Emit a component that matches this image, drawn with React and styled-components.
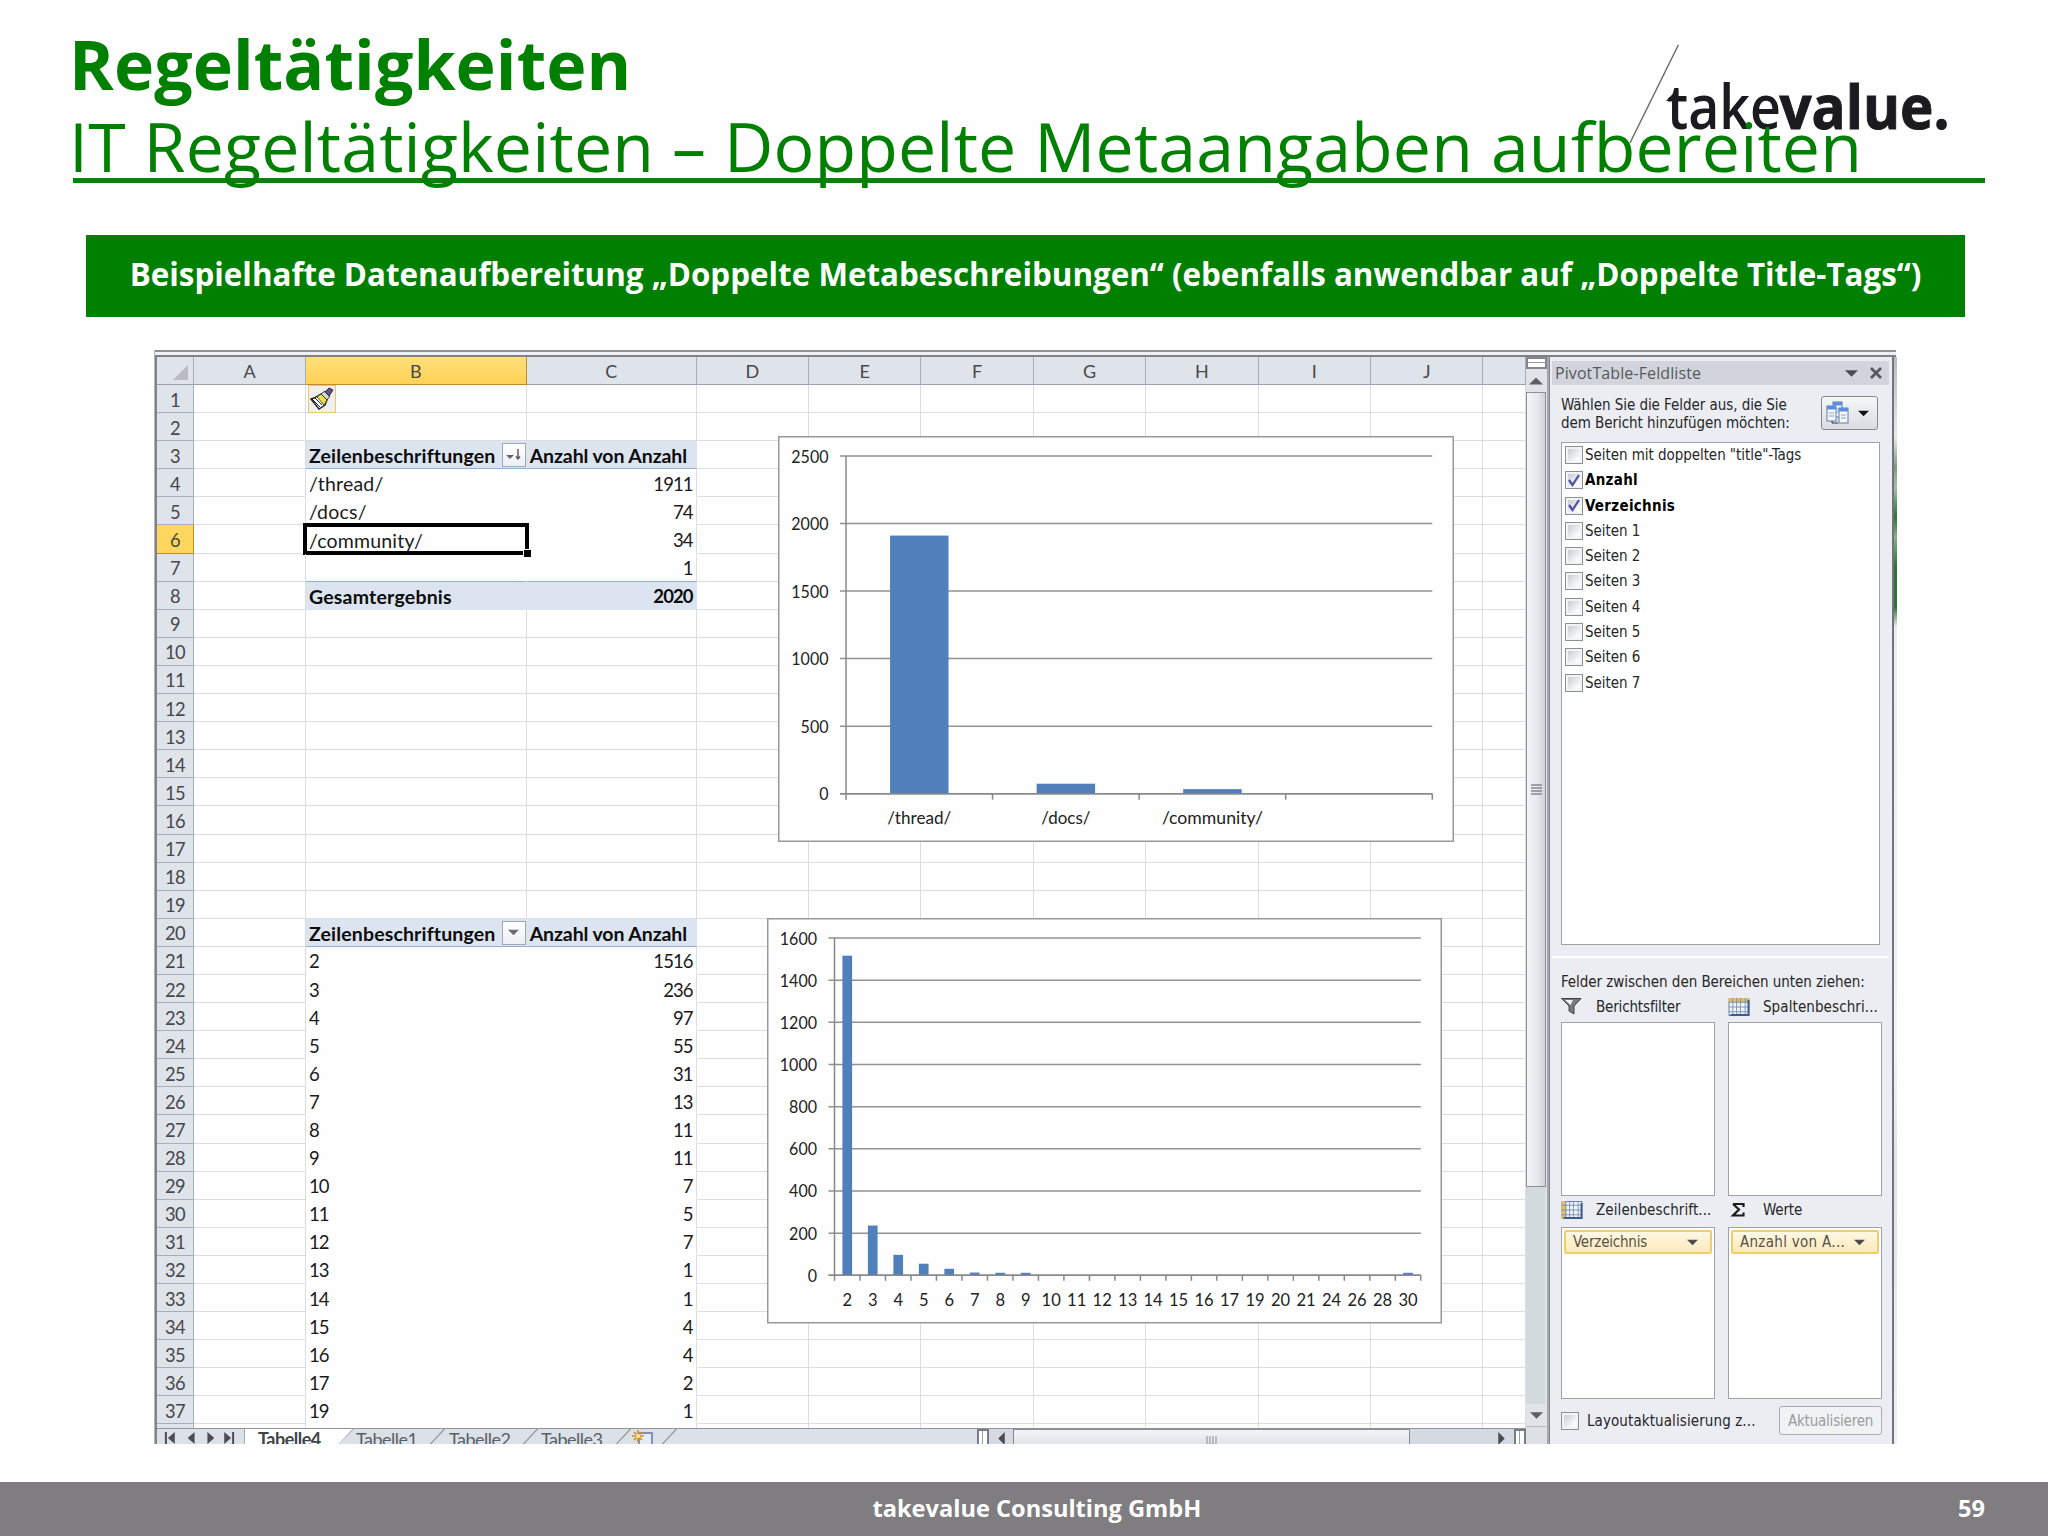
import React from 'react';
import styled, { createGlobalStyle, css } from 'styled-components';

const GlobalStyle = createGlobalStyle`
  body {
    margin: 0;
    background: #fefefe;
    overflow: hidden;
  }

  * {
    box-sizing: border-box;
  }
`;

const sheetFont = "Lato, 'Open Sans', sans-serif";
const paneFont = "'DejaVu Sans Condensed', 'DejaVu Sans', sans-serif";

const Slide = styled.div`
  width: 2048px;
  height: 1536px;
  display: flex;
  flex-direction: column;
  background: #fefefe;
  font-family: 'Open Sans', sans-serif;
`;

const SlideHeader = styled.header`
  position: relative;
  height: 235px;
  padding: 23px 63px 0 73px;
  color: #008000;
`;

const Title = styled.h1`
  margin: 0 0 0 -4px;
  font-size: 68px;
  line-height: 82px;
  font-weight: 700;
  white-space: nowrap;
  letter-spacing: 0.07px;
  position: relative;
`;

const Subtitle = styled(Title)`
  font-weight: 400;
  letter-spacing: 0.16px;
`;

const Rule = styled.div`
  height: 5px;
  margin-top: -9px;
  background: #0a820a;
`;

const Logo = styled.svg`
  position: absolute;
  left: 1620px;
  top: 36px;
  overflow: visible;
`;

const Banner = styled.div`
  height: 82px;
  margin: 0 83px 0 86px;
  padding-bottom: 6px;
  display: flex;
  align-items: center;
  justify-content: center;
  background: #008000;
  color: #fff;
  font-size: 31.35px;
  font-weight: 700;
  white-space: nowrap;
`;

const Footer = styled.footer`
  height: 54px;
  margin-top: auto;
  padding: 0 63px 2px 0;
  display: grid;
  grid-template-columns: 1fr 330px 1fr;
  align-items: center;
  background: #807d80;
  color: #fff;
  font-size: 23.6px;
  font-weight: 700;

  span {
    white-space: nowrap;
  }

  span:nth-child(1) {
    grid-column: 2;
    margin-left: 45px;
  }

  span:nth-child(2) {
    text-align: right;
  }
`;

const Excel = styled.div`
  width: 1743px;
  height: 1094px;
  margin: 33px 0 0 154px;
  display: flex;
  flex-direction: column;
  overflow: hidden;
  border-left: 1px solid #b4b6ba;
`;

const TopStrip = styled.div`
  height: 7px;
  width: 1741px;
  background: #eef0f3;
  border-top: 2px solid #8d9095;
  border-bottom: 2px solid #7e8288;
`;

const Body = styled.div`
  flex: 1;
  display: flex;
  min-height: 0;
`;

const SheetArea = styled.div`
  position: relative;
  width: 1371px;
  border-left: 2px solid #7f8388;
  display: flex;
  flex-direction: column;
  background: #fefefe;
  font-family: ${sheetFont};
`;

const Cells = styled.div`
  height: 1071px;
  overflow: hidden;
`;

const columns = '37px 112px 220.7px 170px repeat(7, 112.4px) 42.5px';

const HeadRow = styled.div`
  display: grid;
  grid-template-columns: ${columns};
  height: 28px;
`;

const HeadCell = styled.div`
  display: flex;
  align-items: center;
  justify-content: center;
  background: ${props => (props.$active ? 'linear-gradient(#ffdf7c, #ffd254)' : '#dfe3ea')};
  border-right: 1px solid ${props => (props.$active ? '#c28a30' : '#a8aeb8')};
  border-bottom: 1px solid ${props => (props.$active ? '#c28a30' : '#98a0ab')};
  color: #46484c;
  font-size: 18px;
`;

const Row = styled(HeadRow)`
  height: 28.1px;
`;

const RowHead = styled.div`
  display: flex;
  align-items: center;
  justify-content: center;
  padding-top: 2px;
  background: ${props => (props.$active ? '#ffd65e' : '#dfe3ea')};
  border-right: 1px solid ${props => (props.$active ? '#c28a30' : '#a8aeb8')};
  border-bottom: 1px solid ${props => (props.$active ? '#c28a30' : '#a8aeb8')};
  color: #46484c;
  font-size: 18.3px;
  letter-spacing: -0.7px;
`;

const Cell = styled.div`
  position: relative;
  display: flex;
  align-items: center;
  justify-content: ${props => (props.$right ? 'flex-end' : 'flex-start')};
  padding: 2px 3px 0;
  border-right: 1px solid #dcdde3;
  border-bottom: 1px solid #dcdde3;
  color: #1a1a1a;
  font-size: ${props => (props.$words ? '19.5px' : '18.5px')};
  letter-spacing: ${props => (props.$words ? '0.2px' : '-0.9px')};
  white-space: nowrap;

  ${props => props.$plain && css`
    border-bottom-color: transparent;
    border-right-color: ${props.$edge ? '#dcdde3' : 'transparent'};
  `}

  ${props => props.$band && css`
    background: #dce4f0;
    border-right-color: #dce4f0;
    border-bottom-color: ${props.$band === 'head' ? '#8fb0d8' : '#dce4f0'};
    color: #0c0c0c;
    font-weight: 700;
  `}

  ${props => props.$band === 'head' && css`
    letter-spacing: ${props.$edge ? '-0.1px' : '0.15px'};
  `}

  ${props => props.$lineBelow && css`
    border-bottom-color: #8fb0d8;
  `}
`;

const Selection = styled.div`
  position: absolute;
  left: -3px;
  top: -2px;
  right: -3px;
  bottom: -2px;
  border: 4px solid #000;

  &::after {
    content: '';
    position: absolute;
    right: -6px;
    bottom: -6px;
    width: 7px;
    height: 7px;
    background: #000;
    outline: 1px solid #fff;
  }
`;

const FilterButton = styled.div`
  position: absolute;
  right: 0;
  top: 2px;
  width: 24px;
  height: 24px;
  display: grid;
  place-items: center;
  border: 1px solid #a3a7b0;
  background: linear-gradient(#fff, #eceff4);
`;

const PasteTag = styled.div`
  position: absolute;
  left: 2px;
  top: 0;
  width: 28px;
  height: 28px;
  border: 1px solid #ecc860;
  background: #f0eeee;
`;

const Chart = styled.svg`
  position: absolute;
  font-family: ${sheetFont};
  font-size: 17px;
  fill: #222;
`;

const ThreadChart = styled(Chart)`
  left: 621px;
  top: 79px;
`;

const CountChart = styled(Chart)`
  left: 610px;
  top: 561px;
`;

const TabBar = styled.div`
  height: 16px;
  display: flex;
  background: #dbe1e6;
  border-top: 1px solid #8f959c;
  overflow: hidden;
`;

const TabNav = styled.svg`
  width: 88px;
  border-right: 1px solid #a4aab0;
`;

const Tabs = styled.div`
  display: flex;
  width: 732px;
`;

const Tab = styled.div`
  position: relative;
  width: ${props => props.$width};
  padding-left: ${props => props.$pad || '11px'};
  color: ${props => (props.$active ? '#3c4548' : '#5a6068')};
  background: ${props => (props.$active ? '#fff' : 'transparent')};
  clip-path: ${props => (props.$active ? 'polygon(0 0, 100% 0, calc(100% - 15px) 100%, 0 100%)' : 'none')};
  font-size: 18px;
  font-weight: ${props => (props.$active ? 700 : 400)};
  line-height: 21px;
  letter-spacing: -0.5px;
  white-space: nowrap;

  svg {
    position: absolute;
    right: 0;
    top: 0;
  }
`;

const HScroll = styled.div`
  flex: 1;
  display: flex;
  background: #d5dae2;
`;

const SplitBox = styled.div`
  width: 12px;
  border: 2px solid #777d84;
  border-bottom: 0;
  background: linear-gradient(90deg, #fff 3px, #9a9fa6 3px, #9a9fa6 4px, #fff 4px);
`;

const ArrowSlot = styled.div`
  width: ${props => (props.$end ? '104px' : '24px')};
  display: flex;
  align-items: center;
  justify-content: ${props => (props.$end ? 'flex-end' : 'center')};
  padding: 3px ${props => (props.$end ? '6px' : '0')} 0 0;
`;

const HThumb = styled.div`
  width: 397px;
  display: flex;
  justify-content: center;
  padding-top: 6px;
  border: 1px solid #868b91;
  border-bottom: 0;
  background: linear-gradient(#f4f5f6, #dfe4e6);
`;

const VScroll = styled.div`
  width: 24px;
  display: flex;
  flex-direction: column;
  border-right: 1px solid #83878d;
  background: #d3dade;
  box-shadow: inset -2px 0 #a4a8b0, inset -4px 0 #dfe2e6;
`;

const VSplit = styled.div`
  width: 21px;
  height: 12px;
  border: 2px solid #82868d;
  background: linear-gradient(#fff 3px, #9a9ea4 3px, #9a9ea4 4px, #fff 4px);
`;

const VButton = styled.div`
  width: 20px;
  height: ${props => props.$height};
  display: grid;
  place-items: center;
  background: #e0e3e8;
`;

const VThumb = styled.div`
  width: 20px;
  height: 795px;
  display: grid;
  place-items: center;
  border: 1px solid #8c9097;
  background: linear-gradient(90deg, #f4f5f8, #e7e9ed 55%, #cfd2d7);
`;

const ScrollTrack = styled.div`
  flex: 1;
`;

const Corner = styled.div`
  height: 18px;
  width: 20px;
  border-top: 1px solid #b3b8be;
  background: #dde0e4;
`;

const Pane = styled.aside`
  width: 343px;
  padding: 4px 3px 0 2px;
  display: flex;
  flex-direction: column;
  background: #ebedf2;
  font-family: ${paneFont};
  font-size: 15px;
  letter-spacing: -0.05px;
  color: #262628;
  white-space: nowrap;
`;

const PaneTitle = styled.div`
  height: 24px;
  display: flex;
  align-items: center;
  padding: 0 6px 0 3px;
  background: #d1d5db;
  color: #55585e;
  font-family: 'Open Sans', sans-serif;
  font-size: 16px;

  span {
    flex: 1;
    letter-spacing: 0.1px;
  }
`;

const PaneIntro = styled.div`
  height: 57px;
  display: flex;
  justify-content: space-between;
  padding: 11px 11px 0 9px;

  p {
    margin: 0;
    line-height: 18px;
  }
`;

const LayoutButton = styled.div`
  width: 57px;
  height: 34px;
  display: flex;
  align-items: center;
  justify-content: space-between;
  padding: 0 8px 0 4px;
  border: 1px solid #85888e;
  border-radius: 3px;
  background: linear-gradient(#f7f7f8, #dadce0);
`;

const FieldList = styled.div`
  height: 503px;
  margin: 0 9px 0 9px;
  padding: 3px 0 0 3px;
  border: 1px solid #9ea2a9;
  background: #fff;
`;

const Field = styled.div`
  height: 25.3px;
  display: flex;
  align-items: flex-start;
  gap: 2px;
  line-height: 18px;
  color: ${props => (props.$checked ? '#000' : '#262628')};
  font-weight: ${props => (props.$checked ? 700 : 400)};
  letter-spacing: ${props => (props.$checked ? '0.3px' : '-0.05px')};
`;

const CheckBox = styled.div`
  width: 18px;
  height: 18px;
  flex: none;
  display: grid;
  place-items: center;
  border: 1px solid #8d9096;
  background: linear-gradient(135deg, #c0c3c9, #fbfbfb 75%);
  box-shadow: inset 0 0 0 2px #f3f3f4;
`;

const Divider = styled.div`
  height: 2px;
  margin: 11px 0 13px;
  background: #fff;
`;

const DragHint = styled.div`
  height: 23px;
  padding-left: 9px;
  line-height: 23px;
`;

const Areas = styled.div`
  display: grid;
  grid-template-columns: 154px 154px;
  grid-template-rows: 28px 173.5px 31.5px 172px;
  column-gap: 13px;
  padding-left: 9px;
`;

const AreaLabel = styled.div`
  display: grid;
  grid-template-columns: 35px 1fr;
  align-items: center;
  letter-spacing: ${props => (props.$long ? '0.1px' : '-0.15px')};
  padding-bottom: 3px;

  svg {
    display: block;
  }
`;

const AreaBox = styled.div`
  padding: 2px;
  border: 1px solid #9ea2a9;
  background: #fff;
`;

const Chip = styled.div`
  height: 24px;
  display: flex;
  align-items: center;
  justify-content: space-between;
  padding: 0 12px 0 7px;
  border: 2px solid #f1cf68;
  border-radius: 2px;
  background: linear-gradient(#fff8e4, #fde9b9);
  color: #55524c;
  letter-spacing: ${props => (props.$long ? '0.3px' : '-0.2px')};
`;

const UpdateRow = styled.div`
  display: flex;
  align-items: center;
  padding: 7px 7px 0 9px;

  span {
    flex: 1;
    padding-left: 8px;
    letter-spacing: 0.1px;
  }
`;

const UpdateButton = styled.div`
  width: 103px;
  height: 29px;
  display: grid;
  place-items: center;
  border: 1px solid #a9acb2;
  border-radius: 3px;
  background: #f1f2f4;
  color: #9a9ca1;
  letter-spacing: -0.2px;
`;

const RightEdge = styled.div`
  width: 5px;
  background: linear-gradient(
    #bbb 0, #e8e8e8 80px, #7f9a83 110px, #a8c0aa 130px, #2c7236 160px, #8fae92 180px,
    #2c7236 210px, #2c7236 250px, #ededed 270px, #f2f2f2 700px, #e2e2e2 800px, #f0f0f0 100%
  );
  border-left: 2px solid #72767b;
`;

const letters = ['A', 'B', 'C', 'D', 'E', 'F', 'G', 'H', 'I', 'J', ''];

const pivotRows = {
  3: { band: 'head', label: 'Zeilenbeschriftungen', value: 'Anzahl von Anzahl', sorted: true },
  4: { label: '/thread/', value: 1911 },
  5: { label: '/docs/', value: 74 },
  6: { label: '/community/', value: 34, selected: true },
  7: { label: '', value: 1, lineBelow: true },
  8: { band: 'total', label: 'Gesamtergebnis', value: 2020 },
  20: { band: 'head', label: 'Zeilenbeschriftungen', value: 'Anzahl von Anzahl' },
};

const counts = [
  [2, 1516], [3, 236], [4, 97], [5, 55], [6, 31], [7, 13], [8, 11], [9, 11], [10, 7],
  [11, 5], [12, 7], [13, 1], [14, 1], [15, 4], [16, 4], [17, 2], [19, 1],
];

counts.forEach(([label, value], i) => {
  pivotRows[21 + i] = { label, value };
});

const fields = [
  { name: 'Seiten mit doppelten "title"-Tags' },
  { name: 'Anzahl', checked: true },
  { name: 'Verzeichnis', checked: true },
  ...[1, 2, 3, 4, 5, 6, 7].map(n => ({ name: `Seiten ${n}` })),
];

const Arrow = ({ dir = 'down', size = 12, color = '#4a4c50' }) => {
  const points = {
    down: '0,3 12,3 6,9',
    up: '0,9 12,9 6,3',
    left: '9,0 9,12 3,6',
    right: '3,0 3,12 9,6',
  };
  return (
    <svg width={size} height={size} viewBox="0 0 12 12">
      <polygon points={points[dir]} fill={color} />
    </svg>
  );
};

const BrushIcon = () => (
  <svg width="26" height="26" viewBox="0 0 26 26">
    <path d="M2 13 L5 12 L12 8 L18 14 L16 19 L10 23 Z" fill="#fff" stroke="#222" strokeWidth="1.4" />
    <path d="M8 11 L12 8 L18 14 L15 19 Z" fill="#e8e04a" stroke="#55521a" />
    <path d="M12 8 L16 5 L21 10 L18 14 Z" fill="#d8d8c8" stroke="#333" />
    <path d="M16 6 L20 2 L24 4 L20 10 Z" fill="#5d5686" stroke="#2a2747" />
    <path d="M3 13 L11 21 M6 12 L13 19" stroke="#222" />
  </svg>
);

const GridIcon = ({ rows }) => (
  <svg width="22" height="18" viewBox="0 0 22 19">
    <rect x="0.5" y="0.5" width="21" height="18" fill="#f2f6fc" stroke="#5f7ba8" />
    {rows
      ? <rect x="0" y="0" width="5" height="19" fill="#e2bd6a" />
      : <rect x="0" y="0" width="22" height="5" fill="#e2bd6a" />}
    <path d="M0 4.5H22M0 9.5H22M0 14.5H22M4.5 0V19M8.5 0V19M12.5 0V19M17.5 0V19" stroke="#7d90b3" />
    <path d="M21 2V18H2" fill="none" stroke="#3d5c8e" strokeWidth="2" />
  </svg>
);

const FunnelIcon = () => (
  <svg width="21" height="17" viewBox="0 0 21 17">
    <path d="M0.5 0.5H20L13 8V16L8 13V8Z" fill="#77797e" stroke="#3f4246" />
    <path d="M4 2H12L9.5 7Z" fill="#f2f2f2" />
  </svg>
);

const SigmaIcon = () => (
  <svg width="22" height="16" viewBox="0 0 22 16">
    <path d="M5 2H15.5V5M5 2L11 7.5L5 13.5H15.5V10.5" fill="none" stroke="#1c1c1c" strokeWidth="2.2" />
  </svg>
);

const SheetsIcon = () => (
  <svg width="23" height="24" viewBox="0 0 23 24">
    {[[7, 1], [1, 5], [13, 7]].map(([x, y]) => (
      <g key={x}>
        <rect x={x} y={y} width="9" height="15" fill="#f4f8fd" stroke="#5d7dab" />
        <rect x={x} y={y} width="9" height="3.500" fill="#5b8de0" />
        <path d={`M${x + 2} ${y + 7}h5M${x + 2} ${y + 10}h5`} stroke="#8aa0bd" />
      </g>
    ))}
    <path d="M6 20V22H12" fill="none" stroke="#333" />
  </svg>
);

const SheetRow = ({ n }) => {
  const row = pivotRows[n];
  return (
    <Row>
      <RowHead $active={n === 6}>{n <= 37 ? n : ''}</RowHead>
      <Cell />
      {row ? (
        <>
          <Cell $plain $words={typeof row.label === 'string'} $band={row.band} $lineBelow={row.lineBelow}>
            {row.label}
            {row.selected && <Selection />}
            {row.band === 'head' && (
              <FilterButton>
                {row.sorted ? (
                  <svg width="16" height="14" viewBox="0 0 16 14">
                    <polygon points="0,7 8,7 4,11" fill="#666" />
                    <path d="M12 1V10M10 8.500L12 11L14 8.500" fill="none" stroke="#555" strokeWidth="1.4" />
                  </svg>
                ) : (
                  <Arrow size={11} color="#6a6c70" />
                )}
              </FilterButton>
            )}
          </Cell>
          <Cell
            $plain
            $edge
            $words={row.band === 'head'}
            $right={row.band !== 'head'}
            $band={row.band}
            $lineBelow={row.lineBelow}
          >
            {row.value}
          </Cell>
        </>
      ) : (
        <>
          <Cell $plain={n > 37}>{n === 1 && <PasteTag><BrushIcon /></PasteTag>}</Cell>
          <Cell $plain={n > 37} $edge />
        </>
      )}
      {letters.slice(3).map((letter, i) => <Cell key={i} />)}
    </Row>
  );
};

const BarChart = ({
  as: Wrapper, width, height, left, right, top, bottom, max, step, data, barWidth, labelY, labelWidth, tick,
}) => {
  const pitch = (right - left) / data.length;
  const yOf = value => bottom - (value / max) * (bottom - top);
  const marks = [];
  for (let v = 0; v <= max; v += step) marks.push(v);

  return (
    <Wrapper width={width} height={height}>
      <rect x="0.75" y="0.75" width={width - 1.5} height={height - 1.5} fill="#fefefe" stroke="#98989c" strokeWidth="1.5" />
      {marks.map(v => (
        <g key={v}>
          <line x1={left - 6} x2={right} y1={yOf(v)} y2={yOf(v)} stroke="#919195" strokeWidth="1.5" />
          <text
            x={left - 17.5}
            y={yOf(v) + 6.5}
            textAnchor="end"
            textLength={String(v).length * 9.3}
            lengthAdjust="spacingAndGlyphs"
          >
            {v}
          </text>
        </g>
      ))}
      {data.map(([label, value], i) => (
        <g key={i}>
          {value > 9 && (
            <rect
              x={left + pitch * (i + 0.5) - barWidth / 2}
              y={Math.min(yOf(value), bottom - 2.5)}
              width={barWidth}
              height={Math.max(bottom - yOf(value), 2.5)}
              fill="#5080bc"
            />
          )}
          {label !== '' && (
            <text
              x={left + pitch * (i + 0.5)}
              y={labelY}
              textAnchor="middle"
              textLength={labelWidth(label)}
              lengthAdjust="spacingAndGlyphs"
            >
              {label}
            </text>
          )}
        </g>
      ))}
      <line x1={left} x2={left} y1={top} y2={bottom} stroke="#88888c" strokeWidth="1.5" />
      <line x1={left - 6} x2={right} y1={bottom} y2={bottom} stroke="#88888c" strokeWidth="1.5" />
      {Array.from({ length: data.length + 1 }, (_, i) => (
        <line
          key={i}
          x1={left + pitch * i}
          x2={left + pitch * i}
          y1={bottom}
          y2={bottom + tick}
          stroke="#88888c"
          strokeWidth="1.5"
        />
      ))}
    </Wrapper>
  );
};

const threadData = [['/thread/', 1911], ['/docs/', 74], ['/community/', 34], ['', 0]];
const threadLabelWidths = { '/thread/': 64, '/docs/': 49, '/community/': 101 };

const countData = [
  ...counts,
  [20, 1], [21, 1], [24, 1], [26, 1], [28, 1], [30, 10],
];

const Slant = () => (
  <svg width="16" height="16" viewBox="0 0 16 16">
    <path d="M15.500 0L0.500 16" stroke="#8f959c" strokeWidth="1.2" />
  </svg>
);

const App = () => (
  <Slide>
    <GlobalStyle />
    <SlideHeader>
      <Logo width="350" height="110" viewBox="1620 36 350 110">
        <line x1="1678.300" y1="45" x2="1630" y2="143" stroke="#66666a" strokeWidth="1.4" />
        <g fill="#1b1a1e" fontFamily="Open Sans" fontSize="61">
          <text x="1667" y="128.500" fontWeight="600" textLength="114" lengthAdjust="spacingAndGlyphs">take</text>
          <text
            x="1779.500"
            y="128.500"
            fontWeight="700"
            textLength="170"
            lengthAdjust="spacingAndGlyphs"
            stroke="#1b1a1e"
            strokeWidth="1"
          >
            value.
          </text>
        </g>
        <polygon points="1666,101 1678.500,88 1678.500,101" fill="#1b1a1e" />
      </Logo>
      <Title>Regeltätigkeiten</Title>
      <Subtitle as="h2">IT Regeltätigkeiten – Doppelte Metaangaben aufbereiten</Subtitle>
      <Rule />
    </SlideHeader>

    <Banner>
      Beispielhafte Datenaufbereitung „Doppelte Metabeschreibungen“ (ebenfalls anwendbar auf „Doppelte Title-Tags“)
    </Banner>

    <Excel>
      <TopStrip />
      <Body>
        <SheetArea>
          <Cells>
            <HeadRow>
              <HeadCell>
                <svg width="34" height="24" viewBox="0 0 34 24">
                  <polygon points="30,6 30,21 15,21" fill="#b9bcc2" />
                </svg>
              </HeadCell>
              {letters.map((letter, i) => (
                <HeadCell key={i} $active={letter === 'B'}>{letter}</HeadCell>
              ))}
            </HeadRow>
            {Array.from({ length: 38 }, (_, i) => <SheetRow key={i} n={i + 1} />)}
          </Cells>
          <BarChart
            as={ThreadChart}
            width={676}
            height={406}
            left={68}
            right={654.3}
            top={20}
            bottom={357.7}
            max={2500}
            step={500}
            data={threadData}
            barWidth={58.5}
            labelY={388}
            labelWidth={label => threadLabelWidths[label]}
            tick={6}
          />
          <BarChart
            as={CountChart}
            width={675}
            height={405.5}
            left={67.5}
            right={653.8}
            top={20}
            bottom={357.3}
            max={1600}
            step={200}
            data={countData}
            barWidth={9.7}
            labelY={387.5}
            labelWidth={label => String(label).length * 9.6}
            tick={5.5}
          />
          <TabBar>
            <TabNav height="15" viewBox="0 0 88 15">
              <path d="M9 3V15M77 3V15" stroke="#4a4e52" strokeWidth="2" />
              <path d="M18 3V15L11 9ZM38 3V15L31 9ZM51 3V15L58 9ZM68 3V15L75 9Z" fill="#4a4e52" />
            </TabNav>
            <Tabs>
              <Tab $active $width="109px" $pad="13px">Tabelle4<Slant /></Tab>
              <Tab $width="91px" $pad="2px">Tabelle1<Slant /></Tab>
              <Tab $width="93px" $pad="4px">Tabelle2<Slant /></Tab>
              <Tab $width="93px" $pad="3px">Tabelle3<Slant /></Tab>
              <Tab $width="46px" $pad="0">
                <svg width="46" height="16" viewBox="0 0 46 16">
                  <rect x="8" y="4" width="13" height="14" fill="#e6ebf8" stroke="#6674a8" strokeWidth="1.500" />
                  <path d="M7 1V13M1 7H13M3 3L11 11M11 3L3 11" stroke="#d28a24" strokeWidth="1.600" />
                  <circle cx="7" cy="7" r="2.200" fill="#ffe58a" />
                  <path d="M45.500 0L30.500 16" stroke="#8f959c" strokeWidth="1.2" />
                </svg>
              </Tab>
            </Tabs>
            <HScroll>
              <SplitBox />
              <ArrowSlot><Arrow dir="left" size={13} /></ArrowSlot>
              <HThumb>
                <svg width="11" height="10" viewBox="0 0 11 10">
                  <path d="M1 0V10M4 0V10M7 0V10M10 0V10" stroke="#888d92" />
                </svg>
              </HThumb>
              <ArrowSlot $end><Arrow dir="right" size={13} /></ArrowSlot>
              <SplitBox />
            </HScroll>
          </TabBar>
        </SheetArea>

        <VScroll>
          <VSplit />
          <VButton $height="23px"><Arrow dir="up" size={14} color="#5d5f63" /></VButton>
          <VThumb>
            <svg width="11" height="12" viewBox="0 0 11 12">
              <path d="M0 1H11M0 4H11M0 7H11M0 10H11" stroke="#878a90" strokeWidth="1.300" />
            </svg>
          </VThumb>
          <ScrollTrack />
          <VButton $height="22px"><Arrow size={13} color="#5d5f63" /></VButton>
          <Corner />
        </VScroll>

        <Pane>
          <PaneTitle>
            <span>PivotTable-Feldliste</span>
            <Arrow size={13} />
            <svg width="25" height="12" viewBox="0 0 25 12">
              <path d="M13 1L23 11M23 1L13 11" stroke="#55585c" strokeWidth="2.800" />
            </svg>
          </PaneTitle>
          <PaneIntro>
            <p>
              Wählen Sie die Felder aus, die Sie
              <br />
              dem Bericht hinzufügen möchten:
            </p>
            <LayoutButton>
              <SheetsIcon />
              <Arrow size={11} color="#111" />
            </LayoutButton>
          </PaneIntro>
          <FieldList>
            {fields.map(field => (
              <Field key={field.name} $checked={field.checked}>
                <CheckBox>
                  {field.checked && (
                    <svg width="12" height="13" viewBox="0 0 12 13">
                      <path d="M1 6L4.500 11L11 1" fill="none" stroke="#4c50a0" strokeWidth="2.200" />
                    </svg>
                  )}
                </CheckBox>
                {field.name}
              </Field>
            ))}
          </FieldList>
          <Divider />
          <DragHint>Felder zwischen den Bereichen unten ziehen:</DragHint>
          <Areas>
            <AreaLabel><FunnelIcon />Berichtsfilter</AreaLabel>
            <AreaLabel $long><GridIcon />Spaltenbeschri...</AreaLabel>
            <AreaBox />
            <AreaBox />
            <AreaLabel $long><GridIcon rows />Zeilenbeschrift...</AreaLabel>
            <AreaLabel><SigmaIcon />Werte</AreaLabel>
            <AreaBox>
              <Chip>Verzeichnis<Arrow size={11} /></Chip>
            </AreaBox>
            <AreaBox>
              <Chip $long>Anzahl von A...<Arrow size={11} /></Chip>
            </AreaBox>
          </Areas>
          <UpdateRow>
            <CheckBox />
            <span>Layoutaktualisierung z...</span>
            <UpdateButton>Aktualisieren</UpdateButton>
          </UpdateRow>
        </Pane>
        <RightEdge />
      </Body>
    </Excel>

    <Footer>
      <span>takevalue Consulting GmbH</span>
      <span>59</span>
    </Footer>
  </Slide>
);

export default App;
